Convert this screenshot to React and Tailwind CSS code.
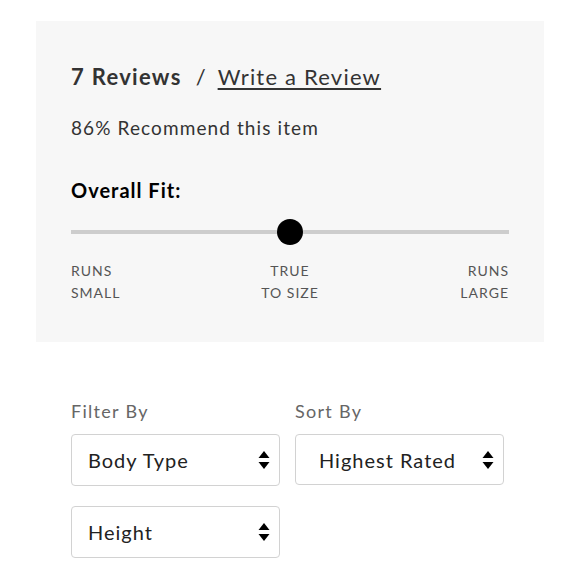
import React from 'react';

const Arrows = () => (
    <svg width="12" height="22" viewBox="0 0 12 22" className="shrink-0">
        <path d="M6 2 L11.5 9 L0.5 9 Z" fill="#000" />
        <path d="M6 20 L11.5 13 L0.5 13 Z" fill="#000" />
    </svg>
);

const Select = ({ label, className = '', padClass = 'pl-[16px]' }) => (
    <div className={`flex items-center justify-between border border-[#d2d2d2] rounded-[4px] bg-white pr-[9px] ${padClass} ${className}`}>
        <span className="text-[20px] text-[#222] tracking-[1px]">{label}</span>
        <Arrows />
    </div>
);

export default function App() {
    return (
        <div className="w-[580px] h-[580px] bg-white overflow-hidden" style={{ fontFamily: 'Lato, "Open Sans", sans-serif' }}>
            {/* Reviews summary panel */}
            <section className="ml-[36px] mt-[21px] w-[508px] h-[321px] bg-[#f7f7f7] px-[35px] pt-[45px]">
                <div className="flex items-baseline text-[22px] text-[#333] leading-none h-[30px]">
                    <span className="font-bold tracking-[1.3px]">7 Reviews</span>
                    <span className="ml-[14px] mr-[12px]">/</span>
                    <span className="underline underline-offset-[3px] decoration-[1.5px] tracking-[1.2px]">Write a Review</span>
                </div>
                <p className="mt-[22px] text-[19px] text-[#333] tracking-[1.1px] leading-none">86% Recommend this item</p>

                <h3 className="mt-[43px] text-[20px] font-bold text-black leading-none tracking-[1px]">Overall Fit:</h3>

                {/* Fit slider */}
                <div className="relative mt-[19px] h-[26px] flex items-center">
                    <div className="w-full h-[4px] bg-[#cdcdcd]" />
                    <div className="absolute left-[206px] top-0 w-[26px] h-[26px] rounded-full bg-black" />
                </div>

                <div className="mt-[15px] grid grid-cols-3 text-[14px] text-[#555] leading-[22px] tracking-[1px]">
                    <div>RUNS<br />SMALL</div>
                    <div className="text-center">TRUE<br />TO SIZE</div>
                    <div className="text-right">RUNS<br />LARGE</div>
                </div>
            </section>

            {/* Filter / sort */}
            <div className="ml-[71px] mt-[60px] flex gap-[15px]">
                <div className="w-[209px]">
                    <div className="text-[18px] text-[#666] leading-none tracking-[1.3px] h-[20px]">Filter By</div>
                    <Select label="Body Type" className="mt-[12px] h-[52px]" />
                    <Select label="Height" className="mt-[20px] h-[52px]" />
                </div>
                <div className="w-[209px]">
                    <div className="text-[18px] text-[#666] leading-none tracking-[1.3px] h-[20px]">Sort By</div>
                    <Select label="Highest Rated" className="mt-[12px] h-[51px]" padClass="pl-[23px]" />
                </div>
            </div>
        </div>
    );
}
